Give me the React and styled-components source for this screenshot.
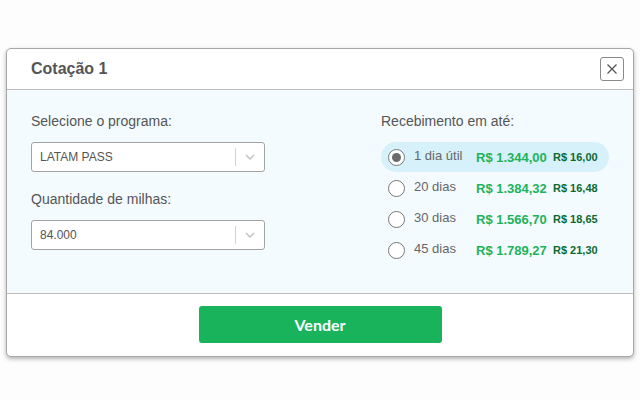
import React, { useState } from 'react';
import styled, { createGlobalStyle } from 'styled-components';

const GlobalStyle = createGlobalStyle`
  * { box-sizing: border-box; }
  body {
    margin: 0;
    background: #fdfdfd;
    font-family: "Liberation Sans", Arial, sans-serif;
  }
`;

const Page = styled.div`
  width: 640px;
  height: 400px;
  padding: 48px 6px 0 6px;
`;

const Modal = styled.div`
  width: 628px;
  height: 309px;
  border: 1px solid #a8a8a8;
  border-radius: 5px;
  background: #fff;
  box-shadow: 0 2px 4px rgba(0, 0, 0, 0.3);
  display: flex;
  flex-direction: column;
  overflow: hidden;
`;

const Header = styled.div`
  height: 41px;
  flex: none;
  display: flex;
  align-items: center;
  justify-content: space-between;
  padding: 0 9px 0 24px;
  border-bottom: 1px solid #bdbdbd;
`;

const Title = styled.h2`
  margin: 0;
  font-size: 16px;
  font-weight: bold;
  color: #555;
`;

const CloseButton = styled.button`
  width: 24px;
  height: 24px;
  padding: 0;
  border: 1px solid #8a8a8a;
  border-radius: 3px;
  background: #fff;
  display: flex;
  align-items: center;
  justify-content: center;
  cursor: pointer;
`;

const Body = styled.div`
  flex: none;
  height: 203px;
  background: #f3fbff;
  display: flex;
  padding: 23px 0 0 24px;
`;

const LeftCol = styled.div`
  width: 350px;
  display: flex;
  flex-direction: column;
`;

const RightCol = styled.div`
  width: 228px;
  display: flex;
  flex-direction: column;
`;

const Label = styled.div`
  font-size: 14px;
  line-height: 17px;
  color: #555;
  margin-bottom: 12px;
`;

const Select = styled.div`
  width: 234px;
  height: 30px;
  border: 1px solid #a3a3a3;
  border-radius: 3px;
  background: #fff;
  display: flex;
  align-items: center;
  margin-bottom: 19px;
`;

const SelectValue = styled.span`
  flex: 1;
  padding-left: 8px;
  font-size: 12px;
  color: #555;
`;

const Separator = styled.span`
  width: 1px;
  height: 18px;
  background: #d2d2d2;
`;

const Chevron = styled.span`
  width: 28px;
  display: flex;
  justify-content: center;
  align-items: center;
`;

const Option = styled.label`
  height: 30px;
  margin-bottom: 1px;
  border-radius: 15px;
  background: ${(p) => (p.$active ? '#d6f1fa' : 'transparent')};
  display: flex;
  align-items: center;
  padding-left: 7px;
  cursor: pointer;
`;

const Radio = styled.span`
  width: 17px;
  height: 17px;
  border-radius: 50%;
  border: 1px solid #777;
  background: #fff;
  display: flex;
  align-items: center;
  justify-content: center;
  margin-right: 9px;
  flex: none;

  &::after {
    content: '';
    display: ${(p) => (p.$checked ? 'block' : 'none')};
    width: 9px;
    height: 9px;
    border-radius: 50%;
    background: #6b6b6b;
  }
`;

const Days = styled.span`
  width: 62px;
  font-size: 13px;
  color: #666;
  margin-top: -3px;
`;

const Price = styled.span`
  width: 77px;
  font-size: 13px;
  font-weight: bold;
  color: #1db35b;
`;

const PerMile = styled.span`
  font-size: 11px;
  font-weight: bold;
  color: #0d6a2e;
`;

const Footer = styled.div`
  flex: 1;
  border-top: 1px solid #bdbdbd;
  display: flex;
  justify-content: center;
  padding-top: 12px;
`;

const SellButton = styled.button`
  width: 243px;
  height: 37px;
  border: none;
  border-radius: 3px;
  background: #19b35b;
  color: #fff;
  font-family: Lato, "Open Sans", sans-serif;
  font-size: 16px;
  font-weight: bold;
  padding-bottom: 2px;
  cursor: pointer;
`;

const options = [
  { days: '1 dia útil', price: 'R$ 1.344,00', per: 'R$ 16,00' },
  { days: '20 dias', price: 'R$ 1.384,32', per: 'R$ 16,48' },
  { days: '30 dias', price: 'R$ 1.566,70', per: 'R$ 18,65' },
  { days: '45 dias', price: 'R$ 1.789,27', per: 'R$ 21,30' },
];

const ChevronIcon = () => (
  <svg width="10" height="6" viewBox="0 0 10 6">
    <path d="M1 1l4 4 4-4" fill="none" stroke="#bdbdbd" strokeWidth="1.3" />
  </svg>
);

const App = () => {
  const [selected, setSelected] = useState(0);

  return (
    <Page>
      <GlobalStyle />
      <Modal>
        <Header>
          <Title>Cotação 1</Title>
          <CloseButton aria-label="Fechar">
            <svg width="12" height="12" viewBox="0 0 12 12">
              <path d="M1.5 1.5l9 9M10.5 1.5l-9 9" stroke="#555" strokeWidth="1.3" />
            </svg>
          </CloseButton>
        </Header>
        <Body>
          <LeftCol>
            <Label>Selecione o programa:</Label>
            <Select>
              <SelectValue>LATAM PASS</SelectValue>
              <Separator />
              <Chevron>
                <ChevronIcon />
              </Chevron>
            </Select>
            <Label>Quantidade de milhas:</Label>
            <Select>
              <SelectValue>84.000</SelectValue>
              <Separator />
              <Chevron>
                <ChevronIcon />
              </Chevron>
            </Select>
          </LeftCol>
          <RightCol>
            <Label>Recebimento em até:</Label>
            {options.map((o, i) => (
              <Option key={i} $active={selected === i} onClick={() => setSelected(i)}>
                <Radio $checked={selected === i} />
                <Days>{o.days}</Days>
                <Price>{o.price}</Price>
                <PerMile>{o.per}</PerMile>
              </Option>
            ))}
          </RightCol>
        </Body>
        <Footer>
          <SellButton>Vender</SellButton>
        </Footer>
      </Modal>
    </Page>
  );
};

export default App;
